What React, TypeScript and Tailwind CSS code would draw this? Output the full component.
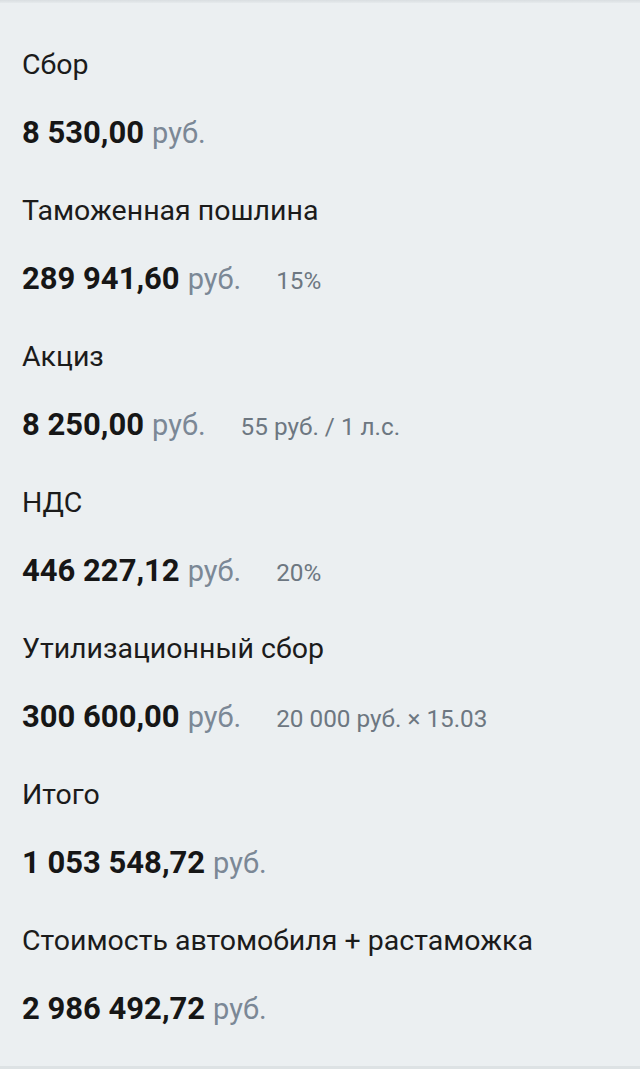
import React from "react";

type Item = { label: string; value: string; note?: string };

const items: Item[] = [
  { label: "Сбор", value: "8 530,00" },
  { label: "Таможенная пошлина", value: "289 941,60", note: "15%" },
  { label: "Акциз", value: "8 250,00", note: "55 руб. / 1 л.с." },
  { label: "НДС", value: "446 227,12", note: "20%" },
  { label: "Утилизационный сбор", value: "300 600,00", note: "20 000 руб. × 15.03" },
  { label: "Итого", value: "1 053 548,72" },
  { label: "Стоимость автомобиля + растаможка", value: "2 986 492,72" },
];

export default function App() {
  return (
    <div
      className="w-[640px] h-[1069px] bg-[#ebeff1] flex flex-col overflow-hidden"
      style={{ fontFamily: "Roboto, 'Noto Sans', sans-serif" }}
    >
      <div className="h-[3px] shrink-0 bg-gradient-to-b from-[#d9dee1] to-[#e6eaec]" />
      <div className="flex-1 flex flex-col gap-[42px] pt-[44px] px-[22px]">
        {items.map((it) => (
          <div key={it.label} className="flex flex-col gap-[32px]">
            <div className="h-[36px] text-[28.5px] leading-[36px] text-[#1b1b1b] whitespace-nowrap">
              {it.label}
            </div>
            <div className="h-[36px] flex items-baseline leading-[36px] whitespace-nowrap">
              <span className="text-[31px] font-bold text-[#161616]">{it.value}</span>
              <span className="text-[29px] text-[#7b8896] ml-[8px]">руб.</span>
              {it.note && (
                <span className="text-[24.3px] text-[#6d7781] ml-[35px]">{it.note}</span>
              )}
            </div>
          </div>
        ))}
      </div>
      <div className="h-[3px] shrink-0 bg-[#dde2e4]" />
    </div>
  );
}
